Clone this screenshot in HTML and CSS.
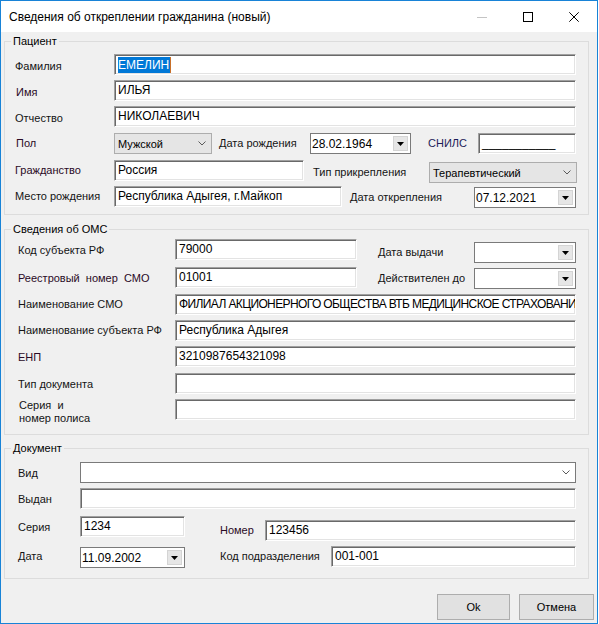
FILE: index.html
```html
<!DOCTYPE html>
<html lang="ru">
<head>
<meta charset="utf-8">
<title>Сведения об откреплении гражданина</title>
<link rel="stylesheet" href="styles.css">
</head>
<body>
<div class="window">
  <div class="titlebar">
    <span class="title">Сведения об откреплении гражданина (новый)</span>
    <div class="caps">
      <div class="cap"><svg width="10" height="10" viewBox="0 0 10 10"><line x1="0" y1="5.5" x2="10" y2="5.5" stroke="#c4c4c4" stroke-width="1"/></svg></div>
      <div class="cap"><svg width="10" height="10" viewBox="0 0 10 10"><rect x="0.5" y="0.5" width="9" height="9" fill="none" stroke="#000" stroke-width="1"/></svg></div>
      <div class="cap"><svg width="10" height="10" viewBox="0 0 10 10"><path d="M0.3 0.3 L9.7 9.7 M9.7 0.3 L0.3 9.7" stroke="#000" stroke-width="1" fill="none"/></svg></div>
    </div>
  </div>

  <div class="client">
    <div class="group g1">
      <div class="legend">Пациент</div>

      <div class="row g1row mt6">
        <span class="lbl w99 low1">Фамилия</span>
        <div class="tb w462"><span class="sel">ЕМЕЛИН</span><span class="caret"></span></div>
      </div>
      <div class="row g1row mt5">
        <span class="lbl w99 ind1 pu low1">Имя</span>
        <div class="tb w462">ИЛЬЯ</div>
      </div>
      <div class="row g1row mt5">
        <span class="lbl w99 low1">Отчество</span>
        <div class="tb w462">НИКОЛАЕВИЧ</div>
      </div>
      <div class="row g1row mt6">
        <span class="lbl w99 ind1 pu">Пол</span>
        <div class="cb w98"><span>Мужской</span><svg class="chev" width="8" height="5" viewBox="0 0 8 5"><polyline points="0.5,0.5 4,4 7.5,0.5" fill="none" stroke="#5a5a5a"/></svg></div>
        <span class="lbl ml7 w91">Дата рождения</span>
        <div class="dp w101"><span>28.02.1964</span><span class="dd"><svg width="7" height="4" viewBox="0 0 7 4"><polygon points="0,0 7,0 3.5,4" fill="#000"/></svg></span></div>
        <span class="lbl ml17 w50 nv">СНИЛС</span>
        <div class="tb w98">___________</div>
      </div>
      <div class="row g1row mt6">
        <span class="lbl w99 pu">Гражданство</span>
        <div class="tb w190">Россия</div>
        <span class="lbl ml9 w116 off2">Тип прикрепления</span>
        <div class="cb w148 off2"><span>Терапевтический</span><svg class="chev" width="8" height="5" viewBox="0 0 8 5"><polyline points="0.5,0.5 4,4 7.5,0.5" fill="none" stroke="#5a5a5a"/></svg></div>
      </div>
      <div class="row g1row mt5">
        <span class="lbl w99">Место рождения</span>
        <div class="tb w228">Республика Адыгея, г.Майкоп</div>
        <span class="lbl ml8 w124 off1">Дата открепления</span>
        <div class="dp w102 off1"><span>07.12.2021</span><span class="dd"><svg width="7" height="4" viewBox="0 0 7 4"><polygon points="0,0 7,0 3.5,4" fill="#000"/></svg></span></div>
      </div>
    </div>

    <div class="group g2">
      <div class="legend">Сведения об ОМС</div>

      <div class="row g2row mt3">
        <span class="lbl w157 off1">Код субъекта РФ</span>
        <div class="tb w182">79000</div>
        <span class="lbl ml21 w96 off3">Дата выдачи</span>
        <div class="dp w102 off3"><span></span><span class="dd"><svg width="7" height="4" viewBox="0 0 7 4"><polygon points="0,0 7,0 3.5,4" fill="#000"/></svg></span></div>
      </div>
      <div class="row g2row mt7">
        <span class="lbl w157 pu off1">Реестровый&nbsp; номер&nbsp; СМО</span>
        <div class="tb w182">01001</div>
        <span class="lbl ml21 w96 off1">Действителен до</span>
        <div class="dp w102 off1"><span></span><span class="dd"><svg width="7" height="4" viewBox="0 0 7 4"><polygon points="0,0 7,0 3.5,4" fill="#000"/></svg></span></div>
      </div>
      <div class="row g2row mt6">
        <span class="lbl w157">Наименование СМО</span>
        <div class="tb w401 narrow">ФИЛИАЛ АКЦИОНЕРНОГО ОБЩЕСТВА ВТБ МЕДИЦИНСКОЕ СТРАХОВАНИ</div>
      </div>
      <div class="row g2row mt5">
        <span class="lbl w157">Наименование субъекта РФ</span>
        <div class="tb w401">Республика Адыгея</div>
      </div>
      <div class="row g2row mt5">
        <span class="lbl w157 pu off1">ЕНП</span>
        <div class="tb w401">3210987654321098</div>
      </div>
      <div class="row g2row mt6">
        <span class="lbl w157 off1">Тип документа</span>
        <div class="tb w401"></div>
      </div>
      <div class="row g2row mt5">
        <span class="lbl w157 two">Серия&nbsp; и<br>номер полиса</span>
        <div class="tb w401"></div>
      </div>
    </div>

    <div class="group g3">
      <div class="legend">Документ</div>

      <div class="row g3row mt7">
        <span class="lbl w62 off1">Вид</span>
        <div class="cb white w496"><span></span><svg class="chev" width="8" height="5" viewBox="0 0 8 5"><polyline points="0.5,0.5 4,4 7.5,0.5" fill="none" stroke="#5a5a5a"/></svg></div>
      </div>
      <div class="row g3row mt5">
        <span class="lbl w62 off1">Выдан</span>
        <div class="tb w496"></div>
      </div>
      <div class="row g3row mt7">
        <span class="lbl w62 off1">Серия</span>
        <div class="tb w105">1234</div>
        <span class="lbl ml35 w45 pu off4">Номер</span>
        <div class="tb w311 off4">123456</div>
      </div>
      <div class="row g3row mt9">
        <span class="lbl w62">Дата</span>
        <div class="dp w105 off1"><span>11.09.2002</span><span class="dd"><svg width="7" height="4" viewBox="0 0 7 4"><polygon points="0,0 7,0 3.5,4" fill="#000"/></svg></span></div>
        <span class="lbl ml35 w111">Код подразделения</span>
        <div class="tb w245">001-001</div>
      </div>
    </div>

    <div class="buttons">
      <div class="btn ok">Ok</div>
      <div class="btn cancel">Отмена</div>
    </div>
  </div>
</div>
</body>
</html>
```

FILE: styles.css
```css
* { box-sizing: border-box; }
html, body { margin: 0; padding: 0; background: #ffffff; }
body {
  font-family: "Liberation Sans", Arial, sans-serif;
  font-size: 11px;
  color: #000;
}

.window {
  width: 598px;
  height: 624px;
  border: 1px solid #1883d7;
  background: #f0f0f0;
  display: flex;
  flex-direction: column;
}

.titlebar {
  flex: none;
  height: 31px;
  background: #fff;
  display: flex;
  align-items: center;
}
.title {
  flex: 1;
  margin-left: 8px;
  font-size: 12px;
  color: #000;
}
.caps { display: flex; height: 31px; }
.cap {
  width: 46px;
  height: 31px;
  display: flex;
  align-items: center;
  justify-content: center;
}

.client {
  flex: 1;
  padding: 0 3px 0 3px;
}

.group {
  width: 585px;
  border: 1px solid #dcdcdc;
}
.g1 { margin-top: 9px; padding-bottom: 7px; }
.g2 { margin-top: 14px; padding-bottom: 14px; }
.g3 { margin-top: 13px; padding-bottom: 11px; }

.legend {
  width: max-content;
  height: 13px;
  line-height: 13px;
  margin: -7px 0 0 6px;
  padding: 0 2px;
  background: #f0f0f0;
  color: #000;
}

.row {
  display: flex;
  align-items: flex-start;
  height: 21px;
}
.g1row { padding-left: 10px; }
.g2row { padding-left: 13px; }
.g3row { padding-left: 13px; }

.mt3 { margin-top: 3px; }
.mt5 { margin-top: 5px; }
.mt6 { margin-top: 6px; }
.mt7 { margin-top: 7px; }
.mt9 { margin-top: 9px; }

.off1 { margin-top: 1px; }
.off2 { margin-top: 2px; }
.off3 { margin-top: 3px; }
.off4 { margin-top: 4px; }

.lbl {
  flex: none;
  height: 21px;
  line-height: 21px;
  white-space: nowrap;
  color: #141414;
}
.lbl.low1 { padding-top: 2px; }
.lbl.ind1 { padding-left: 1px; }
.lbl.pu { color: #2a0a26; }
.lbl.nv { color: #1c1c58; }
.lbl.two {
  line-height: 13px;
  padding-left: 1px;
  margin-top: 0;
}

.ml7 { margin-left: 7px; }
.ml8 { margin-left: 8px; }
.ml9 { margin-left: 9px; }
.ml17 { margin-left: 17px; }
.ml21 { margin-left: 21px; }
.ml35 { margin-left: 35px; }

.w45 { width: 45px; }
.w50 { width: 50px; }
.w62 { width: 62px; }
.w91 { width: 91px; }
.w96 { width: 96px; }
.w98 { width: 98px; }
.w99 { width: 99px; }
.w101 { width: 101px; }
.w102 { width: 102px; }
.w105 { width: 105px; }
.w111 { width: 111px; }
.w116 { width: 116px; }
.w124 { width: 124px; }
.w148 { width: 148px; }
.w157 { width: 157px; }
.w182 { width: 182px; }
.w190 { width: 190px; }
.w228 { width: 228px; }
.w245 { width: 245px; }
.w311 { width: 311px; }
.w401 { width: 401px; }
.w462 { width: 462px; }
.w496 { width: 496px; }

/* sunken text box */
.tb {
  flex: none;
  height: 21px;
  background: #fff;
  border: 1px solid;
  border-color: #a0a0a0 #ffffff #ffffff #a0a0a0;
  box-shadow: inset 1px 1px 0 #696969, inset -1px -1px 0 #e3e3e3;
  font-size: 12px;
  line-height: 19px;
  padding-left: 3px;
  white-space: nowrap;
  overflow: hidden;
  color: #000;
}
.tb.narrow { letter-spacing: -0.62px; }
.sel {
  display: inline-block;
  background: #0078d7;
  color: #fff;
  line-height: 16px;
  height: 16px;
  vertical-align: top;
  margin-top: 2px;
  padding: 0 1px 0 0;
}
.caret {
  display: inline-block;
  width: 1px;
  height: 16px;
  background: #c8702a;
  vertical-align: top;
  margin-top: 2px;
}

/* date picker */
.dp {
  flex: none;
  height: 21px;
  background: #fff;
  border: 1px solid #7a7a7a;
  display: flex;
  align-items: center;
  justify-content: space-between;
  font-size: 12px;
  padding-left: 1px;
  color: #000;
}
.dd {
  width: 15px;
  height: 15px;
  margin-right: 2px;
  background: #e6e6e6;
  border: 1px solid #d4d4d4;
  display: flex;
  align-items: center;
  justify-content: center;
}

/* combo box */
.cb {
  flex: none;
  height: 21px;
  background: #e5e5e5;
  border: 1px solid #adadad;
  display: flex;
  align-items: center;
  justify-content: space-between;
  padding: 0 5px 0 3px;
  font-size: 11px;
  color: #000;
}
.cb.white {
  background: #fff;
  border-color: #7a7a7a;
}
.chev { display: block; }

.buttons {
  display: flex;
  justify-content: flex-end;
  gap: 9px;
  margin-top: 15px;
}
.btn {
  height: 26px;
  background: #e1e1e1;
  border: 1px solid #adadad;
  display: flex;
  align-items: center;
  justify-content: center;
  font-size: 11px;
  color: #000;
}
.ok { width: 73px; }
.cancel { width: 75px; }
```
